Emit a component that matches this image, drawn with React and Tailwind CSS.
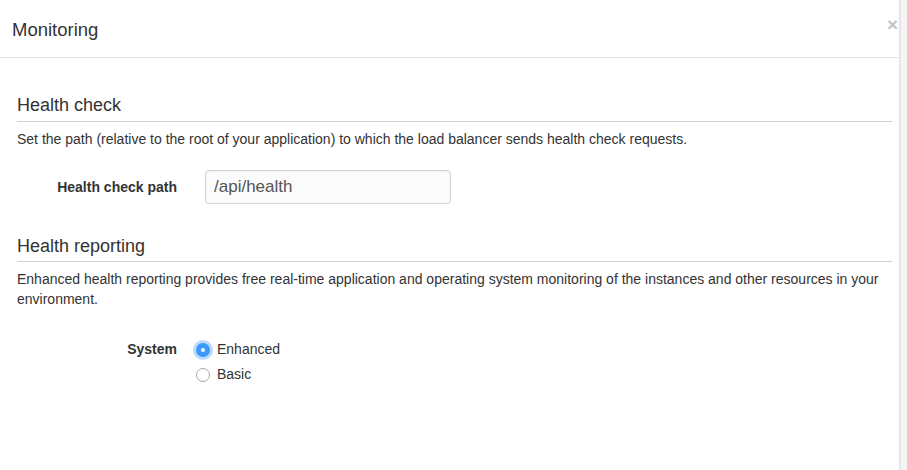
export default function App() {
  const font = { fontFamily: '"Liberation Sans", Arial, sans-serif' };
  return (
    <div className="flex h-[470px] w-full bg-[#f5f5f5]" style={font}>
      <div className="relative h-full w-[901px] border-r-2 border-[#e6e6e6] bg-white text-[#333]">
        {/* header */}
        <div className="flex h-[58px] items-center border-b border-[#e5e5e5] px-[12px] pt-[3px]">
          <h4 className="text-[18.5px] leading-none text-[#333]">Monitoring</h4>
        </div>
        <button className="absolute right-[1px] top-[15px] text-[19px] font-bold leading-none text-[#c4c4c4]">
          ×
        </button>

        <div className="pl-[17px] pr-[7px]">
          {/* Health check */}
          <div className="mt-[34px] border-b border-[#cfcfcf] pb-[2px] text-[18px] leading-[27px]">
            Health check
          </div>
          <p className="mt-[8px] text-[14px] leading-[18px]">
            Set the path (relative to the root of your application) to which the load balancer sends health check requests.
          </p>
          <div className="mt-[22px] flex items-center">
            <label className="w-[160px] text-right text-[14px] font-bold">Health check path</label>
            <div className="ml-[28px] flex h-[34px] w-[246px] items-center rounded-[4px] border border-[#d2d2d2] bg-[#fbfbfb] px-[8px] text-[17px] text-[#555] shadow-[inset_0_1px_1px_rgba(0,0,0,0.05)]">
              /api/health
            </div>
          </div>

          {/* Health reporting */}
          <div className="mt-[29px] border-b border-[#cfcfcf] pb-[1px] text-[18px] leading-[27px]">
            Health reporting
          </div>
          <p className="mt-[7px] text-[14px] leading-[20px]">
            Enhanced health reporting provides free real-time application and operating system monitoring of the instances and other resources in your environment.
          </p>
          <div className="mt-[28px] flex">
            <div className="flex h-[25px] w-[160px] items-center justify-end text-[14px] font-bold">System</div>
            <div className="ml-[19px] flex flex-col">
              <div className="flex h-[25px] items-center">
                <span className="flex h-[14px] w-[14px] items-center justify-center rounded-full bg-[#3b99fc] shadow-[0_0_0_3px_rgba(59,153,252,0.35)]">
                  <span className="h-[4px] w-[4px] rounded-full bg-white" />
                </span>
                <span className="ml-[7px] text-[14px]">Enhanced</span>
              </div>
              <div className="flex h-[25px] items-center">
                <span className="h-[14px] w-[14px] rounded-full border border-[#a8a8a8] bg-white" />
                <span className="ml-[7px] text-[14px]">Basic</span>
              </div>
            </div>
          </div>
        </div>
      </div>
    </div>
  );
}
